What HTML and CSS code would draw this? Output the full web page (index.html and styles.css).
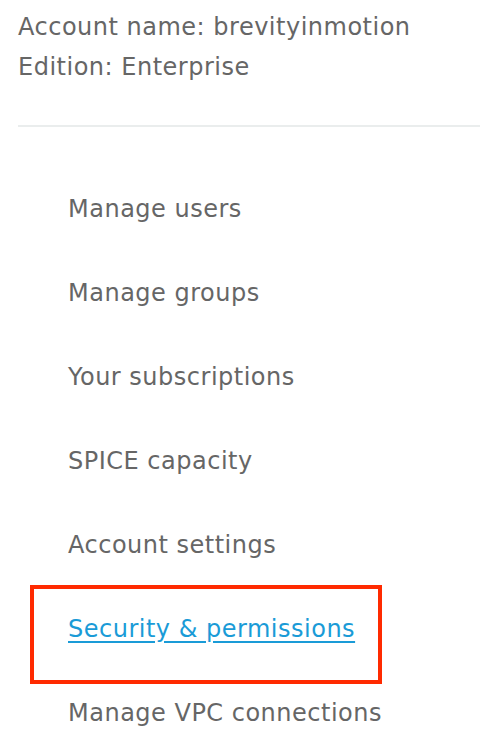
FILE: index.html
```html
<!DOCTYPE html>
<html lang="en">
<head>
  <meta charset="UTF-8">
  <meta name="viewport" content="width=device-width, initial-scale=1">
  <title>Manage QuickSight</title>
  <link rel="stylesheet" href="styles.css">
</head>
<body>

  <div class="account">
    <p>Account name: brevityinmotion</p>
    <p>Edition: Enterprise</p>
  </div>

  <ul class="menu">
    <li><a href="#">Manage users</a></li>
    <li><a href="#">Manage groups</a></li>
    <li><a href="#">Your subscriptions</a></li>
    <li><a href="#">SPICE capacity</a></li>
    <li><a href="#">Account settings</a></li>
    <li class="active"><a href="#">Security &amp; permissions</a></li>
    <li><a href="#">Manage VPC connections</a></li>
  </ul>

</body>
</html>
```

FILE: styles.css
```css
body {
  font-family: 'DejaVu Sans', 'Noto Sans', sans-serif;
  background-color: #ffffff;
  color: #666666;
  margin: 0;
  padding: 0;
}

.account {
  margin-left: 18px;
  padding-top: 7px;
  padding-bottom: 38px;
  border-bottom: 2px solid #eaeded;
}

.account p {
  margin: 0;
  font-size: 24px;
  letter-spacing: 0.5px;
  line-height: 40px;
}

.menu {
  list-style: none;
  margin: 40px 0 0 0;
  padding: 0;
}

.menu li {
  position: relative;
  height: 84px;
  display: flex;
  align-items: center;
  padding-left: 68px;
}

.menu a {
  color: #666666;
  text-decoration: none;
  font-size: 24px;
  letter-spacing: 0.5px;
}

.menu li.active a {
  color: #1a9bd7;
  text-decoration: underline;
  text-underline-offset: 4px;
}

.menu li.active::before {
  content: "";
  position: absolute;
  left: 30px;
  top: -2px;
  width: 344px;
  height: 91px;
  border: 4px solid #ff2a00;
}
```
